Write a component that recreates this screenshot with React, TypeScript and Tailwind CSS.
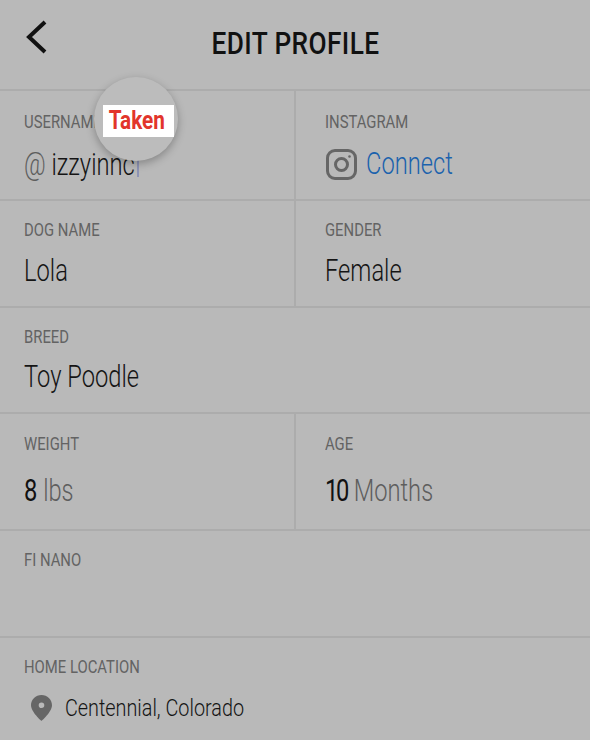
import React from 'react';

const font = "font-['Roboto','Liberation_Sans',sans-serif]";
const line = 'border-[#acacac]';

function Label({ children }: { children: React.ReactNode }) {
  return <div className="text-[18px] leading-[20px] text-[#636363] scale-x-[0.825] origin-left whitespace-nowrap">{children}</div>;
}

function Value({ children, className }: { children: React.ReactNode; className?: string }) {
  return <div className={'text-[31px] leading-[34px] text-[#141414] font-light scale-x-[0.765] origin-left whitespace-nowrap ' + (className ?? '')}>{children}</div>;
}

export default function App() {
  return (
    <div className={'relative w-[590px] h-[740px] overflow-hidden bg-[#b9b9b9] ' + font}>
      <div className="relative h-[89px] flex items-center justify-center">
        <svg className="absolute left-[24px] top-[20px]" width="24" height="34" viewBox="0 0 24 34" fill="none">
          <path d="M21 2 L5 17 L21 32" stroke="#111" strokeWidth="4" />
        </svg>
        <div className="text-[32px] font-medium text-[#111] scale-x-[0.82] tracking-[0.5px] -mt-[4px]">EDIT PROFILE</div>
      </div>

      <div className={'grid grid-cols-[296px_1fr] h-[110px] border-t-2 ' + line}>
        <div className={'pl-[24px] pt-[21px] border-r-2 ' + line}>
          <Label>USERNAME</Label>
          <div className="mt-[16px] flex items-center">
            <Value className="w-[113px]"><span className="text-[#5e5e5e]">@</span> izzyinnc</Value>
            <div className="w-[2px] h-[23px] bg-[#8d93b5]" />
          </div>
        </div>
        <div className="pl-[29px] pt-[21px]">
          <Label>INSTAGRAM</Label>
          <div className="mt-[15px] flex items-center gap-[8px]">
            <svg width="33" height="33" viewBox="0 0 33 33" fill="none" stroke="#666" strokeWidth="3">
              <rect x="2.500" y="2.500" width="28" height="28" rx="7.500" />
              <circle cx="16.500" cy="16.500" r="6" />
              <circle cx="24.500" cy="8.500" r="1.300" fill="#666" stroke="none" />
            </svg>
            <Value className="!text-[#1b62ad]">Connect</Value>
          </div>
        </div>
      </div>

      <div className={'grid grid-cols-[296px_1fr] h-[107px] border-t-2 ' + line}>
        <div className={'pl-[24px] pt-[19px] border-r-2 ' + line}>
          <Label>DOG NAME</Label>
          <Value className="mt-[14px]">Lola</Value>
        </div>
        <div className="pl-[29px] pt-[19px]">
          <Label>GENDER</Label>
          <Value className="mt-[14px]">Female</Value>
        </div>
      </div>

      <div className={'h-[106px] border-t-2 ' + line + ' pl-[24px] pt-[19px]'}>
        <Label>BREED</Label>
        <Value className="mt-[13px]">Toy Poodle</Value>
      </div>

      <div className={'grid grid-cols-[296px_1fr] h-[117px] border-t-2 ' + line}>
        <div className={'pl-[24px] pt-[20px] border-r-2 ' + line}>
          <Label>WEIGHT</Label>
          <Value className="mt-[20px]"><span className="font-normal text-[#111]">8</span> <span className="text-[#5e5e5e]">lbs</span></Value>
        </div>
        <div className="pl-[29px] pt-[20px]">
          <Label>AGE</Label>
          <Value className="mt-[20px]"><span className="font-normal text-[#111] tracking-[-3px]">10</span> <span className="text-[#5e5e5e] ml-[1px]">Months</span></Value>
        </div>
      </div>

      <div className={'h-[107px] border-t-2 ' + line + ' pl-[24px] pt-[19px]'}>
        <Label>FI NANO</Label>
      </div>

      <div className={'border-t-2 ' + line + ' pl-[24px] pt-[19px]'}>
        <Label>HOME LOCATION</Label>
        <div className="mt-[17px] flex items-center">
          <svg className="ml-[7px] mr-[13px]" width="21" height="26" viewBox="0 0 21 26">
            <path fill="#666" fillRule="evenodd" d="M10.500 0C4.700 0 0 4.600 0 10.300 0 17 10.500 26 10.500 26S21 17 21 10.300C21 4.600 16.300 0 10.500 0Zm0 13a2.800 2.800 0 1 1 0-5.600 2.800 2.800 0 0 1 0 5.600Z" />
          </svg>
          <div className="text-[24px] leading-[28px] font-light text-[#141414] scale-x-[0.825] origin-left whitespace-nowrap">Centennial, Colorado</div>
        </div>
      </div>

      <div className="absolute left-[94px] top-[77px] w-[84px] h-[84px] rounded-full bg-[#bcbcbc] shadow-[0_3px_8px_rgba(0,0,0,0.28)] flex items-center justify-center">
        <div className="ml-[5px] mt-[4px] w-[71px] h-[32px] shrink-0 bg-white flex items-center justify-center">
          <span className="text-[25px] font-bold text-[#e2352b] scale-x-[0.83] whitespace-nowrap -ml-[3px]">Taken</span>
        </div>
      </div>
    </div>
  );
}
